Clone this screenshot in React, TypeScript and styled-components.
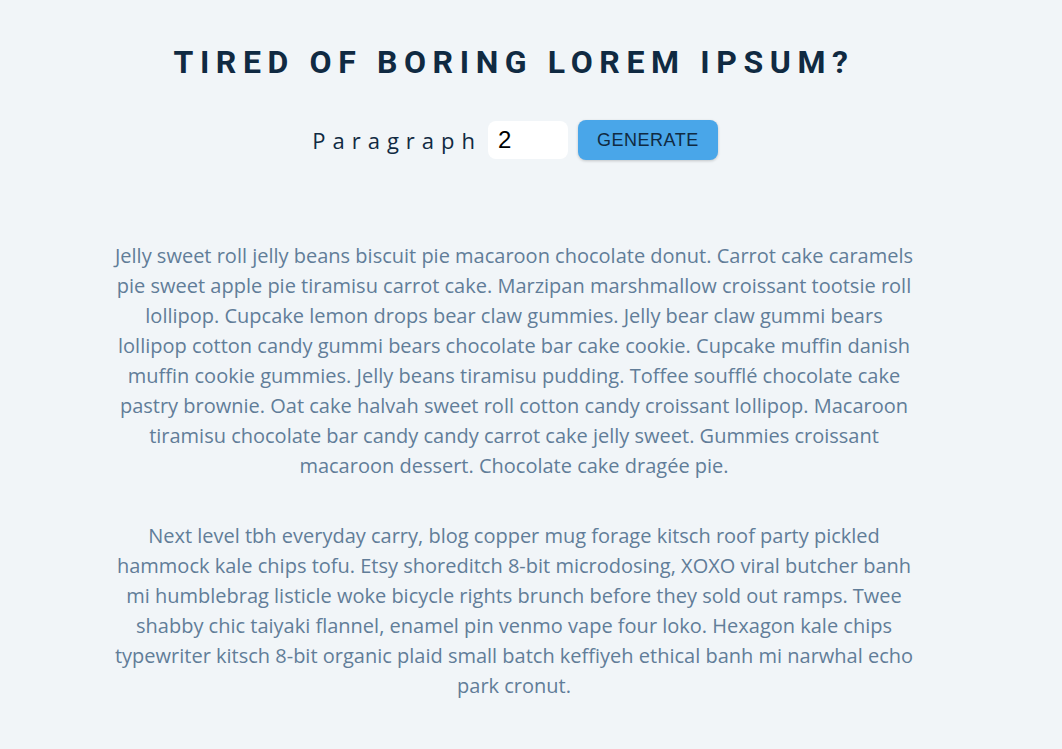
import React, { useState } from "react";
import styled, { createGlobalStyle } from "styled-components";

const GlobalStyle = createGlobalStyle`
  * { box-sizing: border-box; }
  body {
    margin: 0;
    background: #f1f5f8;
    font-family: "Open Sans", "Liberation Sans", sans-serif;
  }
`;

const Section = styled.section`
  width: 800px;
  margin: 0 0 0 114px;
  padding-top: 42px;
  text-align: center;
`;

const Title = styled.h3`
  margin: 0;
  font-family: Roboto, "Liberation Sans", sans-serif;
  font-weight: 700;
  font-size: 32px;
  line-height: 40px;
  letter-spacing: 6.6px;
  color: #102a42;
  text-transform: uppercase;
`;

const Form = styled.form`
  display: flex;
  justify-content: center;
  align-items: center;
  gap: 10px;
  margin-top: 38px;
  padding-left: 2px;
`;

const Label = styled.label`
  font-family: "Open Sans", sans-serif;
  font-size: 22px;
  letter-spacing: 7px;
  color: #102a42;
  margin-right: -4px;
`;

const Input = styled.input`
  width: 80px;
  height: 38px;
  border: none;
  border-radius: 8px;
  background: #fff;
  padding: 0 10px;
  font-family: "Liberation Sans", Arial, sans-serif;
  font-size: 24px;
  color: #000;
  outline: none;
`;

const Button = styled.button`
  height: 40px;
  padding: 0 19px;
  border: none;
  border-radius: 8px;
  background: #49a6e9;
  color: #102a42;
  font-family: "Liberation Sans", Arial, sans-serif;
  font-size: 18px;
  letter-spacing: 0.5px;
  box-shadow: 0 1px 3px rgba(0, 0, 0, 0.2);
  cursor: pointer;
`;

const Text = styled.article`
  margin-top: 81px;
`;

const Para = styled.p`
  margin: 0 0 40px;
  font-size: 20px;
  line-height: 30px;
  color: #617d98;
`;

const paragraphs = [
  "Jelly sweet roll jelly beans biscuit pie macaroon chocolate donut. Carrot cake caramels pie sweet apple pie tiramisu carrot cake. Marzipan marshmallow croissant tootsie roll lollipop. Cupcake lemon drops bear claw gummies. Jelly bear claw gummi bears lollipop cotton candy gummi bears chocolate bar cake cookie. Cupcake muffin danish muffin cookie gummies. Jelly beans tiramisu pudding. Toffee soufflé chocolate cake pastry brownie. Oat cake halvah sweet roll cotton candy croissant lollipop. Macaroon tiramisu chocolate bar candy candy carrot cake jelly sweet. Gummies croissant macaroon dessert. Chocolate cake dragée pie.",
  "Next level tbh everyday carry, blog copper mug forage kitsch roof party pickled hammock kale chips tofu. Etsy shoreditch 8-bit microdosing, XOXO viral butcher banh mi humblebrag listicle woke bicycle rights brunch before they sold out ramps. Twee shabby chic taiyaki flannel, enamel pin venmo vape four loko. Hexagon kale chips typewriter kitsch 8-bit organic plaid small batch keffiyeh ethical banh mi narwhal echo park cronut.",
];

const App = () => {
  const [count, setCount] = useState(2);
  return (
    <>
      <GlobalStyle />
      <Section>
        <Title>tired of boring lorem ipsum?</Title>
        <Form onSubmit={(e) => e.preventDefault()}>
          <Label htmlFor="amount">Paragraph</Label>
          <Input
            id="amount"
            type="text"
            value={count}
            onChange={(e) => setCount(Number(e.target.value) || 0)}
          />
          <Button type="submit">GENERATE</Button>
        </Form>
        <Text>
          {paragraphs.slice(0, count).map((p, i) => (
            <Para key={i}>{p}</Para>
          ))}
        </Text>
      </Section>
    </>
  );
};

export default App;
